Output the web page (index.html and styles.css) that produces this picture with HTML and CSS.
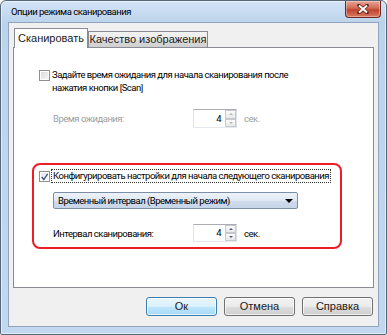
FILE: index.html
```html
<!DOCTYPE html>
<html lang="ru">
<head>
    <meta charset="UTF-8">
    <title>Опции режима сканирования</title>
    <link rel="stylesheet" href="styles.css">
</head>
<body>
<div class="window">
    <div class="titlebar">
        <span class="title">Опции режима сканирования</span>
        <div class="close">
            <svg width="12" height="10" viewBox="0 0 12 10">
                <path d="M2 1.5 L10 8.5 M10 1.5 L2 8.5" stroke="#5e2119" stroke-width="3.6" stroke-linecap="round"/>
                <path d="M2 1.5 L10 8.5 M10 1.5 L2 8.5" stroke="#fff" stroke-width="2"/>
            </svg>
        </div>
    </div>
    <div class="client">
        <div class="tabs">
            <div class="tab active">Сканировать</div>
            <div class="tab">Качество изображения</div>
        </div>
        <div class="panel">
            <!-- время ожидания после кнопки Scan -->
            <div class="wait">
                <div class="check">
                    <span class="box"></span>
                    <span class="lbl">Задайте время ожидания для начала сканирования после<br>нажатия кнопки [Scan]</span>
                </div>
                <div class="row disabled">
                    <span class="rowlabel">Время ожидания:</span>
                    <div class="spin">
                        <span class="val">4</span>
                        <span class="arrows"><span class="up"></span><span class="dn"></span></span>
                    </div>
                    <span class="unit">сек.</span>
                </div>
            </div>
            <!-- обведённый блок -->
            <div class="highlight">
                <div class="check">
                    <span class="box checked">
                        <svg width="10" height="10" viewBox="0 0 10 10">
                            <path d="M2 5 L4.2 7.8 L8.5 1.5" fill="none" stroke="#3f5486" stroke-width="1.5"/>
                        </svg>
                    </span>
                    <span class="lbl focus">Конфигурировать настройки для начала следующего сканирования</span>
                </div>
                <div class="combo">
                    <span>Временный интервал (Временный режим)</span>
                    <svg width="8" height="4" viewBox="0 0 8 4"><path d="M0 0 H8 L4 4 Z" fill="#000"/></svg>
                </div>
                <div class="row">
                    <span class="rowlabel">Интервал сканирования:</span>
                    <div class="spin">
                        <span class="val">4</span>
                        <span class="arrows"><span class="up"></span><span class="dn"></span></span>
                    </div>
                    <span class="unit">сек.</span>
                </div>
            </div>
        </div>
        <div class="buttons">
            <div class="btn default">Ок</div>
            <div class="btn">Отмена</div>
            <div class="btn">Справка</div>
        </div>
    </div>
</div>
</body>
</html>
```

FILE: styles.css
```css
*{
    margin: 0;
    padding: 0;
    box-sizing: border-box;
}
body{
    background: #fff;
    font-family: Roboto, "Noto Sans", sans-serif;
    font-size: 9.5px;
    letter-spacing: -0.5px;
    color: #000;
    white-space: nowrap;
}
.window{
    width: 387px;
    height: 335px;
    border: 1px solid #56677c;
    border-radius: 6px 6px 2px 2px;
    background: linear-gradient(#d3e3f5, #bcd3ec 22px, #c2d8ef);
    box-shadow: inset 0 0 0 1px rgba(255,255,255,.55);
    padding: 0 7px 7px;
    display: flex;
    flex-direction: column;
}
.titlebar{
    height: 21px;
    display: flex;
    align-items: flex-start;
    margin-right: -2px;
}
.title{
    flex: 1;
    padding: 4px 0 0 3px;
    line-height: 14px;
}
.close{
    width: 36px;
    height: 17px;
    border: 1px solid #6e2a22;
    border-top: none;
    border-radius: 0 0 4px 4px;
    background: linear-gradient(#e8a597, #d06a55 45%, #c0432e 55%, #d97a62);
    box-shadow: inset 0 0 0 1px rgba(255,255,255,.35);
    display: flex;
    align-items: center;
    justify-content: center;
}
.client{
    flex: 1;
    background: #f0f0f0;
    border: 1px solid #8ea4bf;
    display: flex;
    flex-direction: column;
    padding: 0 4px;
}
.tabs{
    display: flex;
    align-items: flex-end;
    height: 25px;
    margin-bottom: -1px;
    padding-left: 1px;
    position: relative;
    z-index: 1;
    font-family: "Liberation Sans", sans-serif;
    font-size: 11px;
    letter-spacing: 0;
}
.tab{
    height: 16px;
    margin-bottom: 1px;
    width: 120px;
    border: 1px solid #898c95;
    border-bottom: none;
    background: linear-gradient(#f2f2f2, #ebebeb 50%, #dddddd 51%, #cfcfcf);
    text-align: center;
    line-height: 15px;
    color: #222;
}
.tab.active{
    width: 74px;
    height: 20px;
    margin-bottom: 0;
    background: #fff;
    line-height: 18px;
}
.panel{
    height: 241px;
    background: #fff;
    border: 1px solid #898c95;
    padding: 20px 0 0 18px;
}
.wait{
    padding-left: 7px;
}
.check{
    display: flex;
    align-items: flex-start;
    line-height: 13px;
}
.box{
    width: 11px;
    height: 11px;
    margin-top: 2px;
    margin-right: 1px;
    border: 1px solid #8f8f8f;
    background: linear-gradient(135deg, #d9d9d9, #f7f7f7);
    box-shadow: inset 0 0 0 1px #fff;
    display: flex;
    align-items: center;
    justify-content: center;
}
.box.checked{
    background: linear-gradient(135deg, #e6e6e6, #fafafa);
}
.lbl{
    padding: 0 1px;
}
.focus{
    border: 1px dotted #333;
    line-height: 12px;
}
.row{
    display: flex;
    align-items: center;
    margin: 15px 0 0 14px;
    height: 19px;
}
.rowlabel{
    width: 140px;
}
.disabled{
    color: #a0a0a0;
}
.spin{
    width: 44px;
    height: 19px;
    border: 1px solid #abadb3;
    border-left-color: #e2e3ea;
    border-right-color: #dbdfe6;
    border-bottom-color: #e3e9ef;
    background: #fff;
    display: flex;
    color: #000;
}
.val{
    flex: 1;
    text-align: right;
    padding-right: 4px;
    line-height: 17px;
}
.arrows{
    width: 11px;
    display: flex;
    flex-direction: column;
}
.up,
.dn{
    flex: 1;
    border: 1px solid #c7c9cf;
    background: linear-gradient(#fbfbfb, #e8e8e8);
    display: flex;
    align-items: center;
    justify-content: center;
}
.up::after,
.dn::after{
    content: "";
    border-left: 2px solid transparent;
    border-right: 2px solid transparent;
}
.up::after{
    border-bottom: 2px solid #4d6185;
}
.dn::after{
    border-top: 2px solid #4d6185;
}
.disabled .up::after{
    border-bottom-color: #b5b5b5;
}
.disabled .dn::after{
    border-top-color: #b5b5b5;
}
.unit{
    margin-left: 7px;
}
.highlight{
    margin-top: 35px;
    width: 310px;
    height: 86px;
    border: 2px solid #ee1c24;
    border-radius: 8px;
    padding: 4px 0 0 5px;
}
.combo{
    width: 245px;
    height: 17px;
    margin: 9px 0 0 14px;
    border: 1px solid #7b8fa8;
    border-radius: 2px;
    background: linear-gradient(#eef3fa, #dfe8f3 50%, #cfdcec 51%, #c6d5e8);
    display: flex;
    align-items: center;
    justify-content: space-between;
    padding: 0 4px 0 4px;
}
.highlight .row{
    margin-top: 15px;
    height: 18px;
}
.highlight .spin{
    height: 18px;
}
.highlight .val{
    line-height: 16px;
}
.buttons{
    display: flex;
    justify-content: flex-end;
    gap: 7px;
    margin-top: 9px;
    padding-right: 1px;
    font-family: "Liberation Sans", sans-serif;
    letter-spacing: 0;
}
.btn{
    width: 71px;
    height: 19px;
    border: 1px solid #707070;
    border-radius: 3px;
    background: linear-gradient(#f2f2f2, #ebebeb 50%, #dddddd 51%, #cfcfcf);
    box-shadow: inset 0 0 0 1px rgba(255,255,255,.7);
    text-align: center;
    line-height: 17px;
    font-size: 11px;
    color: #222;
}
.btn.default{
    border-color: #3c7fb1;
    background: linear-gradient(#eaf6fd, #d9f0fc 50%, #bee6fd 51%, #a7d9f5);
}
```
